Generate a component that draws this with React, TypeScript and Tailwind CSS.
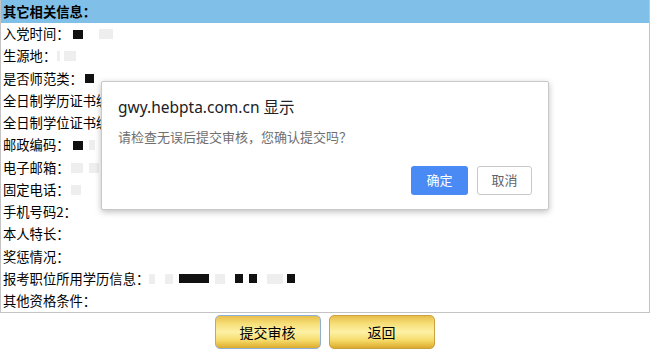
const rows: { label: string; marks?: { w: number; dark?: boolean; gap?: number }[] }[] = [
  { label: '入党时间：', marks: [{ w: 10, dark: true, gap: 4 }, { w: 14, gap: 16 }] },
  { label: '生源地：', marks: [{ w: 3, gap: 1 }, { w: 12, gap: 4 }] },
  { label: '是否师范类：', marks: [{ w: 9, dark: true, gap: 2 }] },
  { label: '全日制学历证书编号：' },
  { label: '全日制学位证书编号：' },
  { label: '邮政编码：', marks: [{ w: 10, dark: true, gap: 4 }, { w: 6, gap: 6 }] },
  { label: '电子邮箱：', marks: [{ w: 12, gap: 2 }, { w: 10, gap: 6 }] },
  { label: '固定电话：', marks: [{ w: 10, gap: 2 }] },
  { label: '手机号码2：' },
  { label: '本人特长：' },
  { label: '奖惩情况：' },
  {
    label: '报考职位所用学历信息：',
    marks: [
      { w: 6, gap: 0 },
      { w: 8, gap: 10 },
      { w: 30, dark: true, gap: 6 },
      { w: 10, gap: 6 },
      { w: 8, dark: true, gap: 10 },
      { w: 8, dark: true, gap: 6 },
      { w: 16, gap: 10 },
      { w: 8, dark: true, gap: 4 },
    ],
  },
  { label: '其他资格条件：' },
];

const goldBtn =
  'w-[106px] h-[34px] rounded-[5px] text-[14px] text-black bg-[linear-gradient(to_bottom,#e8bf4a_0%,#f7e07a_25%,#fdf1a6_50%,#f6dc6c_75%,#dcab2c_100%)]';

const Sheet = () => {
  return (
    <div className="w-[650px] border-x border-b border-[#c4c4c4]">
      <div className="h-[23px] bg-[#80bfe7] px-[2px] text-[13.3px] font-bold leading-[23px] text-black">
        其它相关信息：
      </div>
      {rows.map((r) => (
        <div key={r.label} className="flex h-[22.25px] items-center px-[2px] text-[13.3px] text-black">
          <span className="whitespace-nowrap">{r.label}</span>
          {r.marks?.map((m, i) => (
            <span
              key={i}
              className={m.dark ? 'h-[9px] bg-[#111]' : 'h-[10px] bg-[#eeeeee]'}
              style={{ width: m.w, marginLeft: m.gap ?? 4 }}
            />
          ))}
        </div>
      ))}
    </div>
  );
};

const ConfirmDialog = () => {
  return (
    <div
      className="absolute left-[101px] top-[81px] h-[129px] w-[448px] rounded-[2px] border border-[#c8c8c8] bg-white shadow-[0_2px_6px_rgba(0,0,0,0.25)]"
      style={{ fontFamily: '"Noto Sans", "Noto Sans CJK SC", sans-serif' }}
    >
      <div className="ml-[16px] mt-[14px] text-[15.5px] leading-[22px] text-[#202124]">gwy.hebpta.com.cn 显示</div>
      <div className="ml-[16px] mt-[11px] text-[13px] leading-[16px] text-[#6f6f6f]">
        请检查无误后提交审核，您确认提交吗？
      </div>
      <div className="mr-[16px] mt-[21px] flex justify-end gap-[9px]">
        <button className="h-[29px] w-[57px] rounded-[3px] bg-[#4a8af4] text-[13px] text-white">确定</button>
        <button className="h-[29px] w-[55px] rounded-[3px] border border-[#c9c9c9] bg-white text-[13px] text-[#5f6368]">
          取消
        </button>
      </div>
    </div>
  );
};

const App = () => {
  return (
    <div
      className="relative h-[352px] w-[652px] bg-white"
      style={{ fontFamily: '"Noto Sans CJK SC", "Liberation Sans", sans-serif' }}
    >
      <Sheet />
      <div className="mt-[2px] flex justify-center gap-[8px] pr-[3px]">
        <button className={`${goldBtn} border border-[#8eaed6]`}>提交审核</button>
        <button className={`${goldBtn} border border-[#c9a13e]`}>返回</button>
      </div>
      <ConfirmDialog />
    </div>
  );
};

export default App;
